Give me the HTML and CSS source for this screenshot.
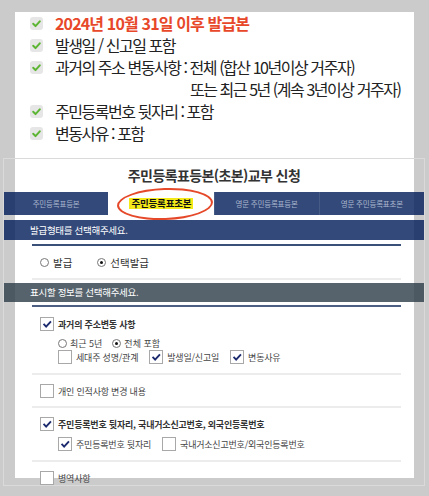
FILE: index.html
```html
<!DOCTYPE html>
<html lang="ko">
<head>
  <meta charset="UTF-8">
  <title>주민등록표초본 발급 안내</title>
  <meta name="viewport" content="width=device-width, initial-scale=1.0">
  <link rel="stylesheet" href="styles.css">
</head>
<body>
  <div class="card">
    <ul class="checklist">
      <li class="point">
        <span class="tick"><svg viewBox="0 0 13 13"><path d="M3.2 6.8l2.3 2.3 4.3-4.8"/></svg></span>
        <span>2024년 10월 31일 이후 발급본</span>
      </li>
      <li>
        <span class="tick"><svg viewBox="0 0 13 13"><path d="M3.2 6.8l2.3 2.3 4.3-4.8"/></svg></span>
        <span>발생일 / 신고일 포함</span>
      </li>
      <li>
        <span class="tick"><svg viewBox="0 0 13 13"><path d="M3.2 6.8l2.3 2.3 4.3-4.8"/></svg></span>
        <span>과거의 주소 변동사항 : 전체 (합산 10년이상 거주자)</span>
      </li>
      <li class="more">또는 최근 5년 (계속 3년이상 거주자)</li>
      <li>
        <span class="tick"><svg viewBox="0 0 13 13"><path d="M3.2 6.8l2.3 2.3 4.3-4.8"/></svg></span>
        <span>주민등록번호 뒷자리 : 포함</span>
      </li>
      <li>
        <span class="tick"><svg viewBox="0 0 13 13"><path d="M3.2 6.8l2.3 2.3 4.3-4.8"/></svg></span>
        <span>변동사유 : 포함</span>
      </li>
    </ul>

    <div class="shot">
      <h3 class="shot-title">주민등록표등본(초본)교부 신청</h3>

      <div class="tabs">
        <div class="tab">주민등록표등본</div>
        <div class="tab active"><span class="mark">주민등록표초본</span></div>
        <div class="tab">영문 주민등록표등본</div>
        <div class="tab">영문 주민등록표초본</div>
      </div>
      <div class="circle"></div>

      <div class="bar">발급형태를 선택해주세요.</div>
      <div class="panel">
        <div class="radio-row">
          <label class="radio big"><span class="dot"></span>발급</label>
          <label class="radio big on"><span class="dot"></span>선택발급</label>
        </div>
      </div>

      <div class="bar slate">표시할 정보를 선택해주세요.</div>
      <div class="panel thin">
        <div class="group">
          <label class="opt strong"><span class="box on"><svg viewBox="0 0 14 14"><path d="M3 6.8l3 3.2 5.6-6.2"/></svg></span>과거의 주소변동 사항</label>
          <div class="sub radios">
            <label class="radio"><span class="dot"></span>최근 5년</label>
            <label class="radio on"><span class="dot"></span>전체 포함</label>
          </div>
          <div class="sub">
            <label class="opt"><span class="box"></span>세대주 성명/관계</label>
            <label class="opt"><span class="box on"><svg viewBox="0 0 14 14"><path d="M3 6.8l3 3.2 5.6-6.2"/></svg></span>발생일/신고일</label>
            <label class="opt"><span class="box on"><svg viewBox="0 0 14 14"><path d="M3 6.8l3 3.2 5.6-6.2"/></svg></span>변동사유</label>
          </div>
        </div>
        <div class="group">
          <label class="opt"><span class="box"></span>개인 인적사항 변경 내용</label>
        </div>
        <div class="group">
          <label class="opt strong"><span class="box on"><svg viewBox="0 0 14 14"><path d="M3 6.8l3 3.2 5.6-6.2"/></svg></span>주민등록번호 뒷자리, 국내거소신고번호, 외국인등록번호</label>
          <div class="sub wide">
            <label class="opt"><span class="box on"><svg viewBox="0 0 14 14"><path d="M3 6.8l3 3.2 5.6-6.2"/></svg></span>주민등록번호 뒷자리</label>
            <label class="opt"><span class="box"></span>국내거소신고번호/외국인등록번호</label>
          </div>
        </div>
        <div class="group">
          <label class="opt"><span class="box"></span>병역사항</label>
        </div>
      </div>
    </div>
  </div>
</body>
</html>
```

FILE: styles.css
```css
body {
  margin: 0;
  height: 496px;
  overflow: hidden;
  background: #cbcbcb;
  font-family: "Noto Sans CJK KR", "Noto Sans", sans-serif;
  color: #222;
}

.card {
  position: relative;
  width: 399px;
  height: 466px;
  margin: 15px 0 0 15px;
  background: #fff;
}

/* 상단 체크 목록 */
.checklist {
  list-style: none;
  margin: -3px 0 0;
  padding: 0 0 0 15px;
}

.checklist li {
  display: flex;
  align-items: center;
  gap: 12px;
  height: 22px;
  font-size: 16px;
  letter-spacing: -1.45px;
  white-space: nowrap;
}

.checklist li.point {
  color: #e8482a;
  font-weight: bold;
  letter-spacing: -0.85px;
}

.checklist li.more {
  padding-left: 160px;
}

.tick {
  display: inline-flex;
  width: 13px;
  height: 13px;
  border-radius: 3px;
  background: #e6e6e6;
}

.tick svg {
  width: 13px;
  height: 13px;
}

.tick path {
  fill: none;
  stroke: #5db534;
  stroke-width: 2;
  stroke-linecap: round;
  stroke-linejoin: round;
}

/* 캡처 화면 */
.shot {
  position: relative;
  width: 420px;
  height: 326px;
  margin: 14px 0 0 -12px;
  border: 1px solid #dadada;
  overflow: hidden;
}

.shot-title {
  margin: 0;
  height: 33px;
  line-height: 33px;
  text-align: center;
  font-size: 14px;
  letter-spacing: -0.6px;
  color: #333;
}

.tabs {
  display: flex;
  height: 23px;
}

.tab {
  flex: 1;
  display: flex;
  align-items: center;
  justify-content: center;
  background: rgba(0, 28, 89, 0.8);
  color: #a9b6cd;
  font-size: 7.5px;
  letter-spacing: -0.2px;
}

.tab + .tab {
  border-left: 1px solid rgba(255, 255, 255, 0.1);
}

.tab.active {
  background: #fff;
  color: #111;
  font-size: 9.5px;
  font-weight: bold;
}

.mark {
  background: #f4ea1a;
  line-height: 11px;
  padding: 0 2px;
}

.circle {
  position: absolute;
  left: 113px;
  top: 29px;
  width: 92px;
  height: 28px;
  border: 2px solid #e5492a;
  border-radius: 50%;
  transform: rotate(-2deg);
}

.bar {
  height: 20px;
  line-height: 20px;
  margin-top: 5px;
  padding-left: 26px;
  background: rgba(0, 28, 89, 0.8);
  color: #fff;
  font-size: 9.5px;
  letter-spacing: -0.3px;
}

.bar.slate {
  height: 19px;
  line-height: 19px;
  margin-top: 3px;
  background: rgba(44, 60, 71, 0.8);
}

.panel {
  margin: 4px 23px 0 28px;
  border-top: 2px solid #3b5078;
}

.panel.thin {
  margin-top: 3px;
  border-top-color: #4d5f82;
}

.radio-row {
  display: flex;
  align-items: center;
  gap: 25px;
  height: 32px;
  padding-left: 8px;
  border-bottom: 2px solid #ececec;
}

.radio {
  display: inline-flex;
  align-items: center;
  gap: 3px;
  font-size: 9px;
  color: #444;
}

.radio.big {
  font-size: 10.5px;
  color: #333;
  gap: 4px;
}

.dot {
  position: relative;
  width: 7px;
  height: 7px;
  border: 1px solid #777;
  border-radius: 50%;
  background: #fff;
}

.radio.on .dot::after {
  content: "";
  position: absolute;
  left: 2px;
  top: 2px;
  width: 3px;
  height: 3px;
  border-radius: 50%;
  background: #111;
}

.group {
  display: flex;
  flex-direction: column;
  align-items: flex-start;
  padding: 9px 0 8px 8px;
  border-bottom: 2px solid #ececec;
}

.group:first-child {
  padding-top: 10px;
  padding-bottom: 9px;
}

.opt {
  display: flex;
  align-items: center;
  gap: 4px;
  height: 14px;
  font-size: 9px;
  color: #444;
  letter-spacing: -0.2px;
  white-space: nowrap;
}

.opt.strong {
  font-weight: bold;
  color: #333;
}

.sub {
  display: flex;
  align-items: center;
  gap: 11px;
  padding-left: 18px;
  margin-top: 1px;
}

.sub.radios {
  gap: 10px;
  height: 12px;
  margin-top: 6px;
}

.sub.wide {
  margin-top: 6px;
  padding-bottom: 1px;
}

.box {
  display: inline-flex;
  width: 12px;
  height: 12px;
  border: 1px solid #a8a8a8;
  background: #fff;
}

.box svg {
  width: 12px;
  height: 12px;
}

.box path {
  fill: none;
  stroke: #1c2a6e;
  stroke-width: 2.2;
}
```
